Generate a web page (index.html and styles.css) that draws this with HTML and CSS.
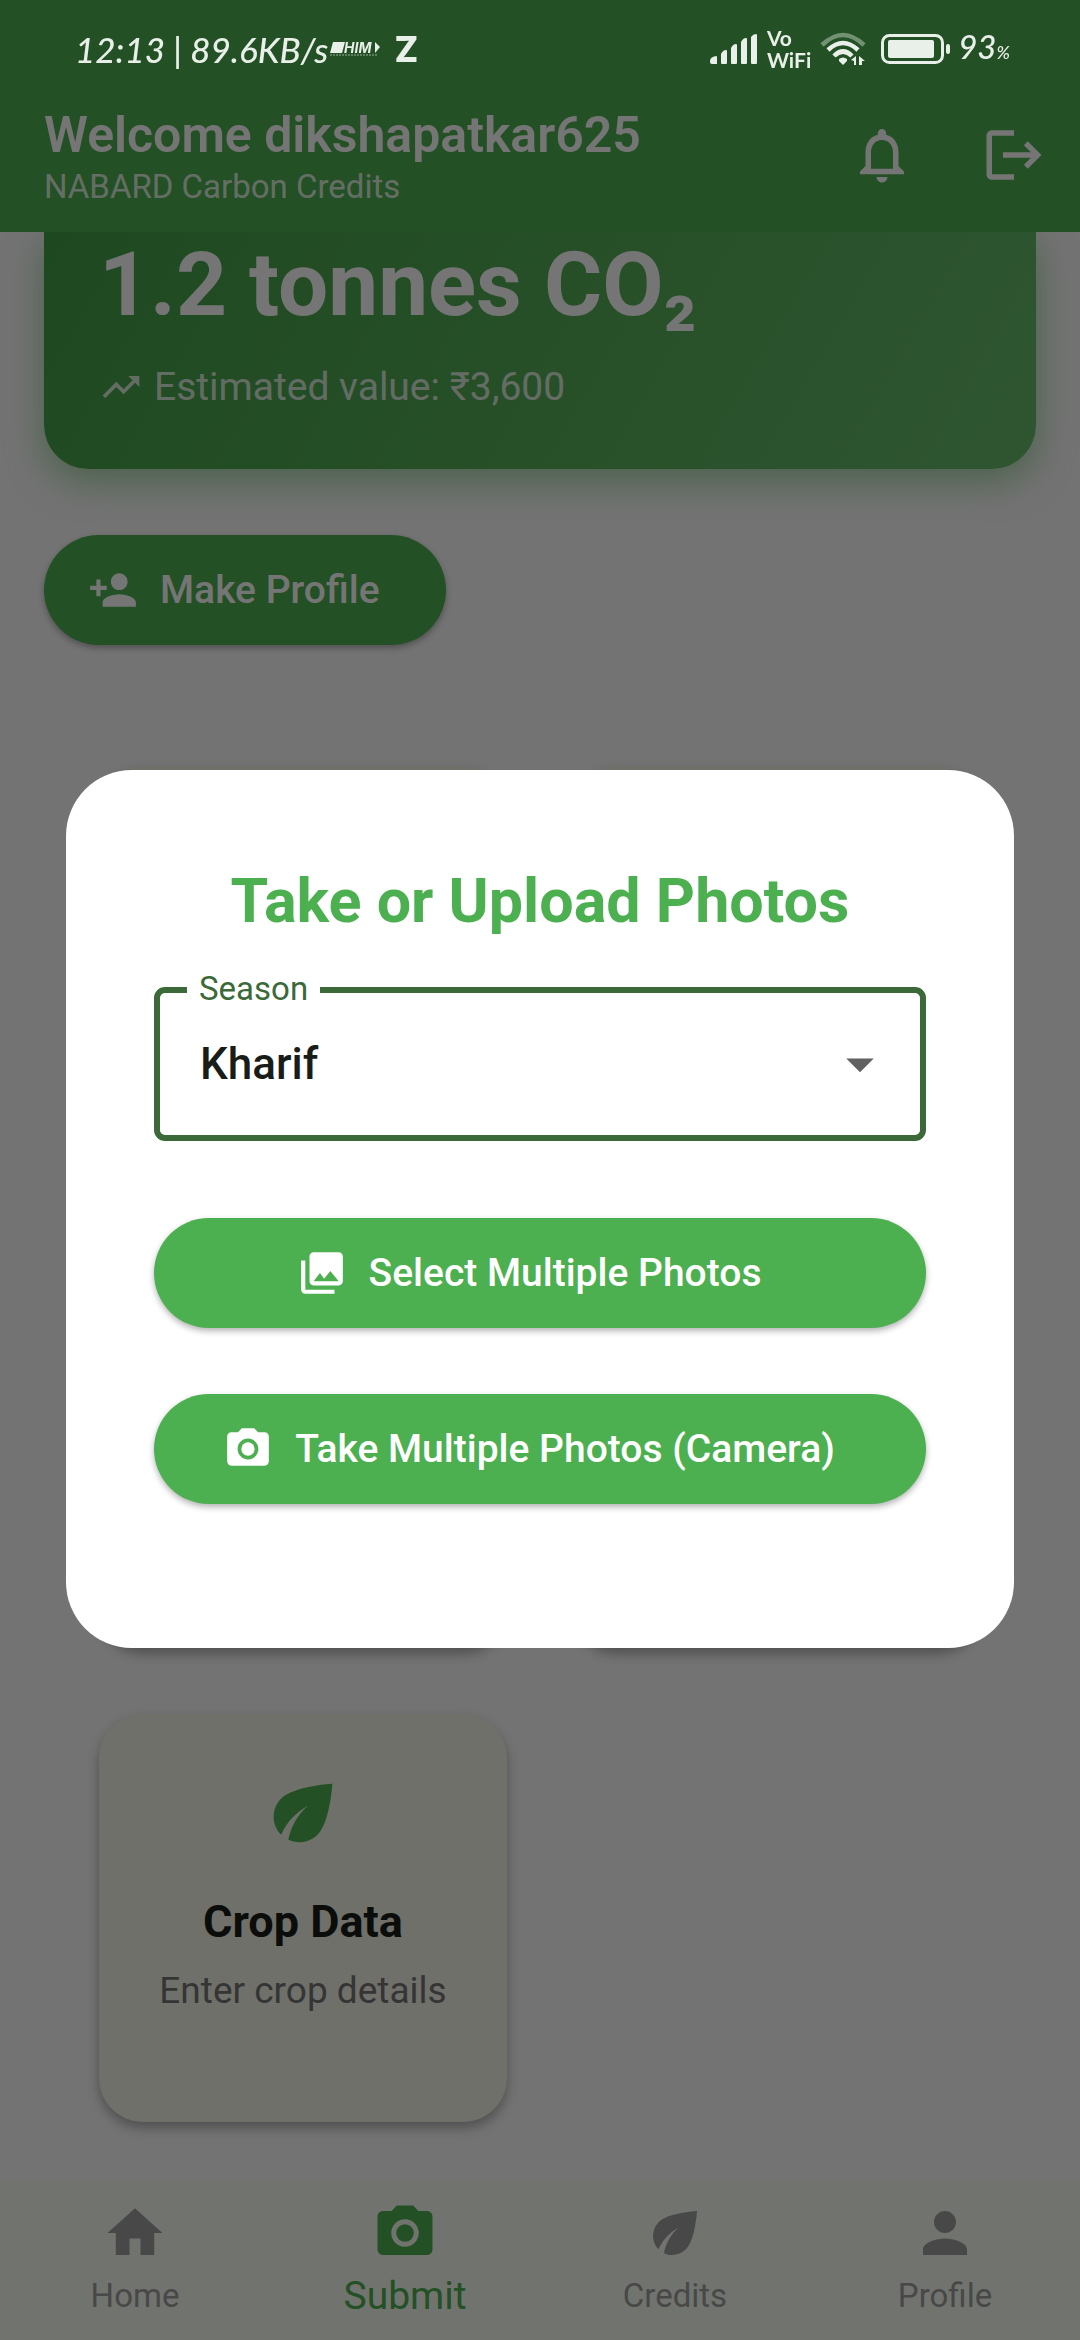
FILE: index.html
```html
<!DOCTYPE html>
<html lang="en">
<head>
<meta charset="utf-8">
<meta name="viewport" content="width=device-width, initial-scale=1">
<title>NABARD Carbon Credits</title>
<link rel="stylesheet" href="styles.css">
</head>
<body>
<div class="status-bar">
  <div class="status-left">
    <span class="clock">12:13 | 89.6KB/s</span>
    <svg class="bhim" viewBox="0 0 52 20" aria-hidden="true">
      <path d="M3 3h12l-3 11H0z"/>
      <text x="14" y="14" class="bhim-text">HIM</text>
      <path d="M45 3l5 5-5 6z"/>
      <path d="M0 16h48" class="bhim-rule"/>
    </svg>
    <span class="z-mark">Z</span>
  </div>
  <div class="status-right">
    <svg class="signal" viewBox="0 0 48 30" aria-hidden="true">
      <path d="M0 27q0-4 6-5q1 0 1 1v7H2q-2 0-2-2zM11 20q2-4 5-4q1 0 1 1v12q0 1-1 1h-4q-1 0-1-1zM21 14q2-4 5-4q1 0 1 1v18q0 1-1 1h-4q-1 0-1-1zM31 8q2-4 5-4q1 0 1 1v24q0 1-1 1h-4q-1 0-1-1zM41 3q2-3 5-3q1 0 1 1v28q0 1-1 1h-4q-1 0-1-1z"/>
    </svg>
    <span class="vowifi"><span>Vo</span><span>WiFi</span></span>
    <svg class="wifi" viewBox="0 0 48 36" aria-hidden="true">
      <g fill="none" stroke="currentColor" stroke-width="4.500">
        <path d="M2 14Q23-6 44 14" opacity=".4"/>
        <path d="M8 19Q23 5 38 19"/>
        <path d="M14 25Q23 16 32 25"/>
      </g>
      <path d="M19 28q4-3 8 0v2l-4 4-4-4z"/>
      <path d="M36 25v9h-2v-4l-3-1zM39 34v-9l6 5h-3v4z"/>
    </svg>
    <svg class="battery" viewBox="0 0 69 30" aria-hidden="true">
      <rect x="1.500" y="1.500" width="60" height="27" rx="7" fill="none" stroke="currentColor" stroke-width="3"/>
      <rect x="7" y="6" width="46" height="18" rx="2"/>
      <rect x="65" y="10" width="4" height="10" rx="2"/>
    </svg>
    <span class="percent">93<small>%</small></span>
  </div>
</div>

<div class="page">
  <header class="app-bar">
    <div class="app-titles">
      <h1>Welcome dikshapatkar625</h1>
      <p>NABARD Carbon Credits</p>
    </div>
    <div class="app-actions">
      <button class="icon-button" aria-label="Notifications"><svg class="icon-24" viewBox="0 0 24 24"><path d="M12 22c1.100 0 2-.9 2-2h-4c0 1.100.89 2 2 2zm6-6v-5c0-3.070-1.640-5.640-4.500-6.320V4c0-.83-.67-1.500-1.500-1.500s-1.500.67-1.500 1.500v.68C7.630 5.360 6 7.920 6 11v5l-2 2v1h16v-1l-2-2zm-2 1H8v-6c0-2.480 1.510-4.500 4-4.500s4 2.020 4 4.500v6z"/></svg></button>
      <button class="icon-button" aria-label="Log out"><svg class="icon-24" viewBox="0 0 24 24"><path d="M17 7l-1.410 1.410L18.170 11H8v2h10.170l-2.580 2.580L17 17l5-5zM4 5h8V3H4c-1.100 0-2 .9-2 2v14c0 1.100.9 2 2 2h8v-2H4V5z"/></svg></button>
    </div>
  </header>

  <main class="content">
    <section class="credit-card">
      <p class="credit-value">1.2 tonnes CO₂</p>
      <p class="credit-estimate"><svg class="icon-16" viewBox="0 0 24 24"><path d="M16 6l2.290 2.290-4.880 4.880-4-4L2 16.590 3.410 18l6-6 4 4 6.300-6.290L22 12V6z"/></svg>Estimated value: ₹3,600</p>
    </section>
    <button class="pill"><svg class="icon-18" viewBox="0 0 24 24"><path d="M15 12c2.210 0 4-1.790 4-4s-1.790-4-4-4-4 1.790-4 4 1.790 4 4 4zm-9-2V7H4v3H1v2h3v3h2v-3h3v-2H6zm9 4c-2.670 0-8 1.340-8 4v2h16v-2c0-2.660-5.330-4-8-4z"/></svg>Make Profile</button>
    <section class="tiles">
      <div class="tile"></div>
      <div class="tile"></div>
      <div class="tile"></div>
      <div class="tile"></div>
      <div class="tile">
        <svg class="icon-32" viewBox="0 0 24 24"><path d="M6.050 8.050c-2.730 2.730-2.730 7.150-.02 9.880 1.470-3.400 4.090-6.240 7.360-7.930-2.770 2.340-4.710 5.610-5.390 9.320 2.600 1.230 5.800.78 7.950-1.370C19.430 14.470 20 4 20 4S9.530 4.570 6.050 8.050z"/></svg>
        <h2>Crop Data</h2>
        <p>Enter crop details</p>
      </div>
    </section>
  </main>

  <nav class="bottom-nav">
    <a href="#home"><svg class="icon-24" viewBox="0 0 24 24"><path d="M10 20v-6h4v6h5v-8h3L12 3 2 12h3v8z"/></svg>Home</a>
    <a href="#submit" class="active" aria-current="page"><svg class="icon-24" viewBox="0 0 24 24"><circle cx="12" cy="12" r="3.200"/><path d="M9 2L7.170 4H4c-1.100 0-2 .9-2 2v12c0 1.100.9 2 2 2h16c1.100 0 2-.9 2-2V6c0-1.100-.9-2-2-2h-3.170L15 2H9zm3 15c-2.760 0-5-2.240-5-5s2.240-5 5-5 5 2.240 5 5-2.240 5-5 5z"/></svg>Submit</a>
    <a href="#credits"><svg class="icon-24" viewBox="0 0 24 24"><path d="M6.050 8.050c-2.730 2.730-2.730 7.150-.02 9.880 1.470-3.400 4.090-6.240 7.360-7.930-2.770 2.340-4.710 5.610-5.390 9.320 2.600 1.230 5.800.78 7.950-1.370C19.430 14.470 20 4 20 4S9.530 4.570 6.050 8.050z"/></svg>Credits</a>
    <a href="#profile"><svg class="icon-24" viewBox="0 0 24 24"><path d="M12 12c2.210 0 4-1.790 4-4s-1.790-4-4-4-4 1.790-4 4 1.790 4 4 4zm0 2c-2.670 0-8 1.340-8 4v2h16v-2c0-2.660-5.330-4-8-4z"/></svg>Profile</a>
  </nav>
</div>

<div class="scrim">
  <div class="dialog" role="dialog" aria-labelledby="dialog-title">
    <h2 id="dialog-title">Take or Upload Photos</h2>
    <div class="field">
      <label for="season">Season</label>
      <select id="season"><option>Kharif</option></select>
      <svg class="icon-24 caret" viewBox="0 0 24 24" aria-hidden="true"><path d="M7 10l5 5 5-5z"/></svg>
    </div>
    <div class="dialog-actions">
      <button class="pill"><svg class="icon-18" viewBox="0 0 24 24"><path d="M22 16V4c0-1.100-.9-2-2-2H8c-1.100 0-2 .9-2 2v12c0 1.100.9 2 2 2h12c1.100 0 2-.9 2-2zm-11-4l2.030 2.710L16 11l4 5H8l3-4zM2 6v14c0 1.100.9 2 2 2h14v-2H4V6H2z"/></svg>Select Multiple Photos</button>
      <button class="pill"><svg class="icon-18" viewBox="0 0 24 24"><circle cx="12" cy="12" r="3.200"/><path d="M9 2L7.170 4H4c-1.100 0-2 .9-2 2v12c0 1.100.9 2 2 2h16c1.100 0 2-.9 2-2V6c0-1.100-.9-2-2-2h-3.170L15 2H9zm3 15c-2.760 0-5-2.240-5-5s2.240-5 5-5 5 2.240 5 5-2.240 5-5 5z"/></svg>Take Multiple Photos (Camera)</button>
    </div>
  </div>
</div>
</body>
</html>
```
FILE: styles.css
```css
:root {
  --green: #4caf50;
  --primary: #3c6939;
  --surface: #f7fbf1;
  --card: #f1f3e8;
  --status: #e9efe9;
}

* {
  box-sizing: border-box;
  margin: 0;
}

body {
  font-family: Roboto, sans-serif;
  background: #fafafa;
}

svg {
  display: block;
  flex: none;
  fill: currentColor;
}

button {
  border: 0;
  background: none;
  color: inherit;
  font: inherit;
}

.icon-16 { width: 44px; height: 44px; }
.icon-18 { width: 50px; height: 50px; }
.icon-24 { width: 66px; height: 66px; }
.icon-32 { width: 88px; height: 88px; }

/* System status bar, above everything */
.status-bar {
  position: fixed;
  inset: 0 0 auto;
  z-index: 3;
  height: 98px;
  padding: 0 70px 0 75px;
  display: flex;
  align-items: center;
  justify-content: space-between;
  color: var(--status);
}

.status-left,
.status-right {
  display: flex;
  align-items: center;
}

.clock {
  font: italic 500 35px/40px Lato, sans-serif;
}

.bhim { width: 52px; height: 20px; margin-left: 2px; }
.bhim-text { font: italic 700 14px Inter, sans-serif; }
.bhim-rule { stroke: currentColor; stroke-dasharray: 2 1; opacity: .6; }

.z-mark {
  margin-left: 12px;
  font: 800 35px/40px Inter, sans-serif;
}

.signal { width: 48px; height: 30px; }

.vowifi {
  margin-left: 9px;
  display: grid;
  font: 700 21px/22px Lato, sans-serif;
}

.wifi { width: 48px; height: 36px; margin-left: 9px; }
.battery { width: 69px; height: 30px; margin-left: 13px; }

.percent {
  margin-left: 8px;
  font: italic 500 33px/40px Lato, sans-serif;
}

.percent small { font-size: 18px; }

/* App */
.page {
  min-height: 100vh;
  display: flex;
  flex-direction: column;
}

.app-bar {
  position: relative;
  z-index: 1;
  height: 232px;
  padding: 78px 33px 0 44px;
  display: flex;
  align-items: center;
  justify-content: space-between;
  background: var(--green);
  color: #fff;
}

.app-titles {
  padding-top: 2px;
  display: grid;
  gap: 2px;
}

.app-bar h1 {
  font-size: 50px;
  font-weight: 600;
  line-height: 60px;
}

.app-bar p {
  font-size: 33px;
  line-height: 40px;
  opacity: .8;
}

.app-actions {
  display: flex;
  gap: 66px;
}

.icon-button { padding: 0; }

.content {
  flex: 1;
  padding: 0 44px 59px;
}

.credit-card {
  padding: 0 55px 60px;
  border-radius: 0 0 44px 44px;
  background: linear-gradient(120deg, #43a047, #66bb6a);
  box-shadow: 0 12px 36px rgba(76, 175, 80, .5);
  color: #fff;
}

.credit-value {
  font-size: 89px;
  font-weight: 700;
  line-height: 106px;
}

.credit-estimate {
  margin-top: 27px;
  display: flex;
  gap: 11px;
  font-size: 39px;
  line-height: 44px;
  color: rgba(255, 255, 255, .8);
}

.pill {
  min-height: 110px;
  padding: 0 66px 0 44px;
  display: flex;
  align-items: center;
  justify-content: center;
  gap: 22px;
  border-radius: 55px;
  background: var(--green);
  color: #fff;
  font-size: 39px;
  font-weight: 500;
  line-height: 44px;
  box-shadow: 0 3px 6px rgba(0, 0, 0, .3);
}

.content > .pill { margin-top: 66px; }

.tiles {
  margin-top: 121px;
  padding: 0 55px;
  display: grid;
  grid-template-columns: 1fr 1fr;
  gap: 66px;
}

.tile {
  aspect-ratio: 1;
  padding-top: 55px;
  display: flex;
  flex-direction: column;
  align-items: center;
  border-radius: 44px;
  background: var(--card);
  color: #191d17;
  box-shadow: 0 6px 12px rgba(0, 0, 0, .3);
}

.tile svg { color: var(--green); }

.tile h2 {
  margin-top: 32px;
  font-size: 45px;
  font-weight: 700;
  line-height: 66px;
}

.tile p {
  margin-top: 9px;
  font-size: 37px;
  line-height: 54px;
  color: #757575;
}

.bottom-nav {
  padding: 19px 0 22px;
  display: grid;
  grid-template-columns: repeat(4, 1fr);
  background: var(--surface);
}

.bottom-nav a {
  display: flex;
  flex-direction: column;
  align-items: center;
  gap: 8px;
  font-size: 33px;
  line-height: 44px;
  color: #9e9e9e;
  text-decoration: none;
}

.bottom-nav .active {
  color: var(--green);
  font-size: 39px;
}

/* Photo dialog */
.scrim {
  position: fixed;
  inset: 0;
  z-index: 2;
  padding: 78px 66px 0;
  display: grid;
  align-items: center;
  background: rgba(0, 0, 0, .54);
}

.dialog {
  padding: 88px 88px 144px;
  border-radius: 66px;
  background: #fff;
}

.dialog h2 {
  text-align: center;
  font-size: 61px;
  font-weight: 700;
  line-height: 87px;
  color: var(--green);
}

.field {
  position: relative;
  margin-top: 42px;
}

.field label {
  position: absolute;
  left: 33px;
  top: -18px;
  padding: 0 12px;
  background: #fff;
  color: var(--primary);
  font-size: 33px;
  line-height: 40px;
}

.field select {
  display: block;
  width: 100%;
  height: 154px;
  padding: 0 40px;
  appearance: none;
  border: 6px solid var(--primary);
  border-radius: 11px;
  background: #fff;
  color: #191d17;
  font: 500 44px/52px Roboto, sans-serif;
}

.caret {
  position: absolute;
  right: 33px;
  top: 44px;
  color: #616161;
  pointer-events: none;
}

.dialog-actions {
  margin-top: 77px;
  display: grid;
  gap: 66px;
}
```
